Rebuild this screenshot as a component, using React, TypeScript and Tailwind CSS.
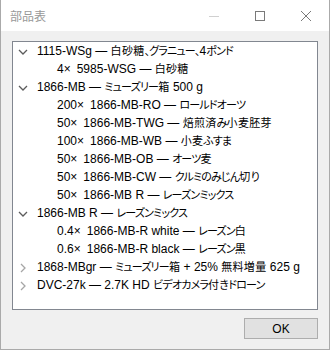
import React from "react";

type Row = {
  level: 0 | 1;
  open?: boolean;
  qty?: string;
  text: string;
};

const rows: Row[] = [
  { level: 0, open: true, text: "1115-WSg — 白砂糖、グラニュー、4ポンド" },
  { level: 1, qty: "4×", text: "5985-WSG — 白砂糖" },
  { level: 0, open: true, text: "1866-MB — ミューズリー箱 500 g" },
  { level: 1, qty: "200×", text: "1866-MB-RO — ロールドオーツ" },
  { level: 1, qty: "50×", text: "1866-MB-TWG — 焙煎済み小麦胚芽" },
  { level: 1, qty: "100×", text: "1866-MB-WB — 小麦ふすま" },
  { level: 1, qty: "50×", text: "1866-MB-OB — オーツ麦" },
  { level: 1, qty: "50×", text: "1866-MB-CW — クルミのみじん切り" },
  { level: 1, qty: "50×", text: "1866-MB R — レーズンミックス" },
  { level: 0, open: true, text: "1866-MB R — レーズンミックス" },
  { level: 1, qty: "0.4×", text: "1866-MB-R white — レーズン白" },
  { level: 1, qty: "0.6×", text: "1866-MB-R black — レーズン黒" },
  { level: 0, open: false, text: "1868-MBgr — ミューズリー箱 + 25% 無料増量 625 g" },
  { level: 0, open: false, text: "DVC-27k — 2.7K HD ビデオカメラ付きドローン" },
];

// kana and kanji are set a bit narrower, like the UI font in the shot
const MixedText = ({ text }: { text: string }) => (
  <>
    {text.split(/([\u3000-\u30ff\uff00-\uffef]+|[\u4e00-\u9fff]+)/).map((part, i) => {
      if (i % 2 === 0) return <span key={i}>{part}</span>;
      if (/[\u4e00-\u9fff]/.test(part))
        return (
          <span key={i} className="text-[11px] tracking-[0.3px]">
            {part}
          </span>
        );
      return (
        <span key={i} className="text-[11px] tracking-[-0.8px]">
          {part}
        </span>
      );
    })}
  </>
);

const Chevron = ({ open }: { open: boolean }) =>
  open ? (
    <svg width="10" height="10" viewBox="0 0 10 10">
      <path d="M1 3 L5 7 L9 3" fill="none" stroke="#5c5c5c" strokeWidth="1.3" />
    </svg>
  ) : (
    <svg width="10" height="10" viewBox="0 0 10 10">
      <path d="M3 1 L7 5 L3 9" fill="none" stroke="#a6a6a6" strokeWidth="1.3" />
    </svg>
  );

const TreeRow = ({ row }: { row: Row }) => {
  if (row.level === 1) {
    return (
      <div className="flex items-center h-[18px] pl-[44px] whitespace-nowrap">
        <span>{row.qty}</span>
        <span className="ml-[6px]">
          <MixedText text={row.text} />
        </span>
      </div>
    );
  }
  return (
    <div className="flex items-center h-[18px] whitespace-nowrap">
      <span className="ml-[4px] w-[12px] flex justify-center pt-[1px]">
        <Chevron open={!!row.open} />
      </span>
      <span className="ml-[8px]">
        <MixedText text={row.text} />
      </span>
    </div>
  );
};

export default function App() {
  return (
    <div className="w-[330px] h-[350px] flex flex-col bg-[#f0f0f0] border-x border-b border-[#aaaaaa] text-[12px] text-black overflow-hidden font-['Liberation_Sans','Noto_Sans_CJK_JP',sans-serif] [font-feature-settings:'palt']">
      {/* title bar */}
      <div className="h-[31px] bg-white flex items-center shrink-0">
        <span className="ml-[9px] mt-[2px] text-[12px] text-[#999999]">部品表</span>
        <div className="ml-auto flex h-full">
          <div className="w-[46px] flex items-center justify-center">
            <svg width="10" height="10" viewBox="0 0 10 10">
              <path d="M0 5.5 H10" stroke="#d0d0d0" strokeWidth="1" />
            </svg>
          </div>
          <div className="w-[46px] flex items-center justify-center">
            <svg width="10" height="10" viewBox="0 0 10 10">
              <rect x="0.5" y="0.5" width="9" height="9" fill="none" stroke="#7a7a7a" strokeWidth="1" />
            </svg>
          </div>
          <div className="w-[46px] flex items-center justify-center">
            <svg width="10" height="10" viewBox="0 0 10 10">
              <path d="M0 0 L10 10 M10 0 L0 10" stroke="#7a7a7a" strokeWidth="1" />
            </svg>
          </div>
        </div>
      </div>

      {/* client */}
      <div className="flex-1 flex flex-col pl-[11px] pr-[11px] pt-[10px]">
        <div className="w-[306px] h-[269px] bg-white border border-[#828790] overflow-hidden">
          {rows.map((r, i) => (
            <TreeRow key={i} row={r} />
          ))}
        </div>
        <div className="flex justify-end mt-[8px]">
          <button className="w-[74px] h-[21px] bg-[#e1e1e1] border border-[#adadad] text-[12px] text-black flex items-center justify-center">
            OK
          </button>
        </div>
      </div>
    </div>
  );
}
